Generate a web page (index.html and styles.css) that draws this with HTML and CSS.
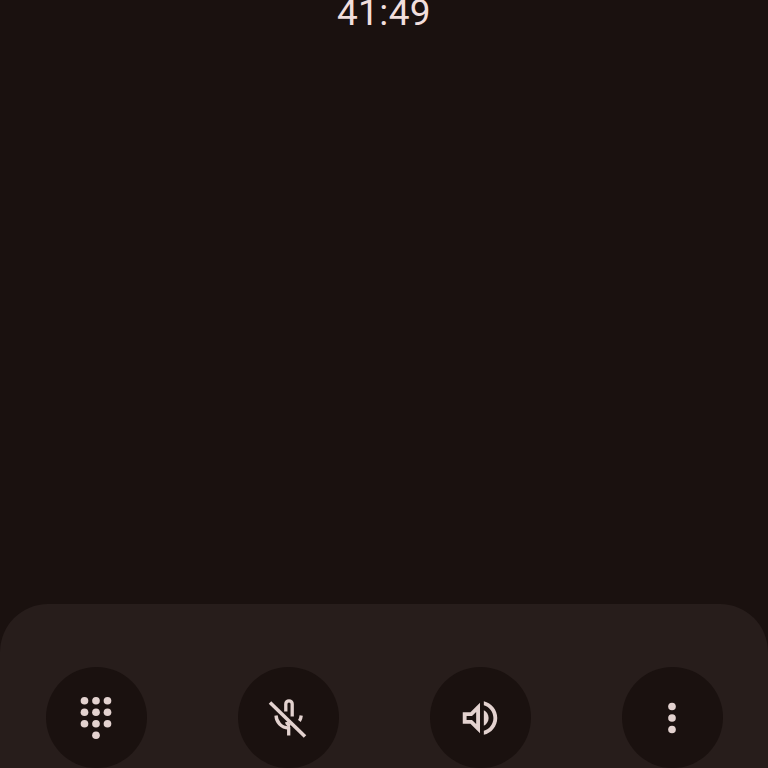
FILE: index.html
```html
<!DOCTYPE html>
<html lang="en">
<head>
<meta charset="utf-8">
<title>Call</title>
<link rel="stylesheet" href="styles.css">
</head>
<body>
<main class="screen">
  <div class="timer">41:49</div>
  <section class="controls">
    <button class="control" aria-label="Keypad">
      <svg class="icon" viewBox="0 0 24 24"><circle cx="6" cy="3" r="2"/><circle cx="12" cy="3" r="2"/><circle cx="18" cy="3" r="2"/><circle cx="6" cy="9" r="2"/><circle cx="12" cy="9" r="2"/><circle cx="18" cy="9" r="2"/><circle cx="6" cy="15" r="2"/><circle cx="12" cy="15" r="2"/><circle cx="18" cy="15" r="2"/><circle cx="12" cy="21" r="2"/></svg>
    </button>
    <button class="control" aria-label="Unmute">
      <svg class="icon icon-line" viewBox="0 0 46 46">
        <path d="M20.8 16.5V9a3.2 3.2 0 0 1 6.4 0V21.5"/>
        <path d="M21.5 27q1 3 3.7 3.8"/>
        <path d="M11 20.5C11.5 27 16 32.8 23.7 33"/>
        <path d="M23.7 32V40.5"/>
        <path d="M36.2 20.5q-.3 3.3-1.8 5.5"/>
        <path class="slash" d="M5 7.5L40 41.5"/>
      </svg>
    </button>
    <button class="control" aria-label="Speaker">
      <svg class="icon" viewBox="0 0 24 24"><path d="M3 9v6h4l5 5V4L7 9H3zm7-.17v6.34L7.83 13H5v-2h2.83L10 8.83zM16.5 12c0-1.77-1.02-3.29-2.5-4.03v8.05c1.48-.73 2.5-2.25 2.5-4.02zM14 3.23v2.06c2.89.86 5 3.54 5 6.71s-2.11 5.85-5 6.71v2.06c4.01-.91 7-4.49 7-8.77 0-4.28-2.99-7.86-7-8.77z"/></svg>
    </button>
    <button class="control" aria-label="More options">
      <svg class="icon" viewBox="0 0 24 24"><circle cx="12" cy="6" r="2"/><circle cx="12" cy="12" r="2"/><circle cx="12" cy="18" r="2"/></svg>
    </button>
  </section>
</main>
</body>
</html>
```
FILE: styles.css
```css
html, body {
  margin: 0;
  padding: 0;
  height: 100%;
  background: #1a110f;
}

.screen {
  display: flex;
  flex-direction: column;
  justify-content: space-between;
  height: 768px;
  overflow: hidden;
  background: #1a110f;
}

.timer {
  margin-top: -7px;
  font-family: Roboto, "Liberation Sans", sans-serif;
  font-size: 37px;
  font-weight: 400;
  line-height: 40px;
  letter-spacing: 0.4px;
  text-align: center;
  color: #f1dedc;
}

.controls {
  display: grid;
  grid-template-columns: repeat(4, 1fr);
  height: 164px;
  padding-top: 63px;
  box-sizing: border-box;
  justify-items: center;
  background: #271d1b;
  border-radius: 48px 48px 0 0;
}

.control {
  display: flex;
  align-items: center;
  justify-content: center;
  width: 101px;
  height: 101px;
  padding: 0;
  border: 0;
  border-radius: 50%;
  background: #1a110f;
}

.icon {
  width: 46px;
  height: 46px;
  fill: #e3d2cf;
}

.icon-line {
  fill: none;
  stroke: #e3d2cf;
  stroke-width: 3.3;
}

.slash {
  stroke-width: 3.6;
}
```
